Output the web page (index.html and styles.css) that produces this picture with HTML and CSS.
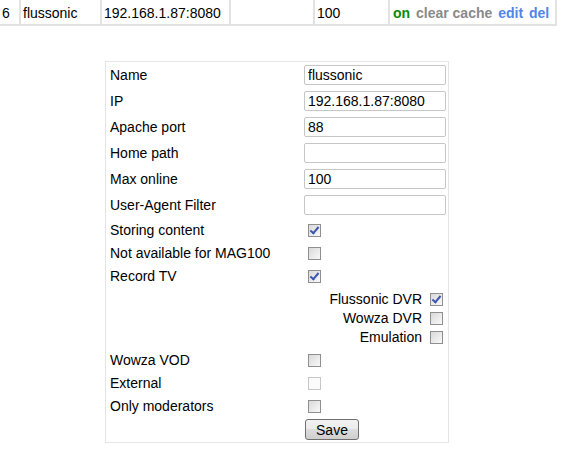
FILE: index.html
```html
<!DOCTYPE html>
<html lang="en">
<head>
    <meta charset="UTF-8">
    <meta name="viewport" content="width=device-width, initial-scale=1.0">
    <title>Storages</title>
    <link rel="stylesheet" href="styles.css">
</head>
<body>
    <table class="storage-list">
        <tr>
            <td class="col-id">6</td>
            <td class="col-name">flussonic</td>
            <td class="col-ip">192.168.1.87:8080</td>
            <td class="col-path"></td>
            <td class="col-max">100</td>
            <td class="col-actions">
                <a href="#" class="act-on">on</a>
                <a href="#" class="act-cache">clear cache</a>
                <a href="#" class="act-edit">edit</a>
                <a href="#" class="act-edit">del</a>
            </td>
        </tr>
    </table>

    <form class="edit-form">
        <div class="row text-row">
            <label>Name</label>
            <input type="text" value="flussonic">
        </div>
        <div class="row text-row">
            <label>IP</label>
            <input type="text" value="192.168.1.87:8080">
        </div>
        <div class="row text-row">
            <label>Apache port</label>
            <input type="text" value="88">
        </div>
        <div class="row text-row">
            <label>Home path</label>
            <input type="text" value="">
        </div>
        <div class="row text-row">
            <label>Max online</label>
            <input type="text" value="100">
        </div>
        <div class="row text-row">
            <label>User-Agent Filter</label>
            <input type="text" value="">
        </div>
        <div class="row check-row">
            <label>Storing content</label>
            <input type="checkbox" checked>
        </div>
        <div class="row check-row">
            <label>Not available for MAG100</label>
            <input type="checkbox">
        </div>
        <div class="row check-row">
            <label>Record TV</label>
            <input type="checkbox" checked>
        </div>

        <!-- варианты записи -->
        <div class="sub-options">
            <label class="sub-row">Flussonic DVR <input type="checkbox" checked></label>
            <label class="sub-row">Wowza DVR <input type="checkbox"></label>
            <label class="sub-row">Emulation <input type="checkbox"></label>
        </div>

        <div class="row check-row">
            <label>Wowza VOD</label>
            <input type="checkbox">
        </div>
        <div class="row check-row">
            <label>External</label>
            <input type="checkbox" disabled>
        </div>
        <div class="row check-row">
            <label>Only moderators</label>
            <input type="checkbox">
        </div>
        <div class="row button-row">
            <span></span>
            <button type="button">Save</button>
        </div>
    </form>
</body>
</html>
```

FILE: styles.css
```css
body {
    margin: 0;
    font-family: "Liberation Sans", Arial, sans-serif;
    font-size: 14px;
    color: #000;
    background: #fff;
}

/* список серверов */
.storage-list {
    margin: -2px 0 0 -2px;
    border-spacing: 2px;
    background-color: #e2e2e2;
}

.storage-list td {
    background-color: #fff;
    padding: 5px 2px 3px 2px;
    line-height: 16px;
    white-space: nowrap;
}

.col-id { width: 15px; }
.col-name { width: 75px; }
.col-ip { width: 123px; }
.col-path { width: 78px; }
.col-max { width: 69px; }
.col-actions { width: 160px; padding-left: 3px !important; }

.col-actions a {
    font-weight: bold;
    text-decoration: none;
    margin-right: 2px;
}

.act-on { color: #0b8a0b; }
.act-cache { color: #8a8a8a; }
.act-edit { color: #4f86ec; }

/* форма редактирования */
.edit-form {
    width: 344px;
    margin: 35px 0 0 105px;
    padding: 0 2px 0 4px;
    box-sizing: border-box;
    border: 1px solid #e4e4e4;
}

.row {
    display: grid;
    grid-template-columns: 194px 142px;
    align-items: center;
}

.text-row { height: 26px; }
.check-row { height: 23px; }

.button-row {
    height: 25px;
    align-items: start;
    padding-top: 2px;
    box-sizing: border-box;
}

.text-row input {
    width: 142px;
    height: 20px;
    box-sizing: border-box;
    margin: 0;
    padding: 0 3px;
    border: 1px solid #c6c6c6;
    border-radius: 2px;
    font-family: inherit;
    font-size: 14px;
    color: #000;
}

input[type="checkbox"] {
    appearance: none;
    -webkit-appearance: none;
    position: relative;
    width: 13px;
    height: 13px;
    margin: 1px 0 0 4px;
    border: 1px solid #8f8f8f;
    background: linear-gradient(135deg, #d9d9d9, #f9f9f9);
}

input[type="checkbox"]:checked::after {
    content: "";
    position: absolute;
    left: 3px;
    top: 0px;
    width: 3px;
    height: 7px;
    border: solid #3c55b0;
    border-width: 0 2px 2px 0;
    transform: rotate(40deg);
}

input[type="checkbox"]:disabled {
    border-color: #c7c7c7;
    background: #fbfbfb;
}

.sub-options {
    padding: 2px 0;
}

.sub-row {
    display: flex;
    justify-content: flex-end;
    align-items: center;
    gap: 4px;
    height: 19px;
    padding-right: 3px;
}

button {
    width: 54px;
    height: 21px;
    margin-left: 1px;
    padding: 0;
    border: 1px solid #707070;
    border-radius: 3px;
    background: linear-gradient(#f2f2f2, #ebebeb 50%, #dddddd 50%, #cfcfcf);
    font-family: inherit;
    font-size: 14px;
    color: #000;
}
```
